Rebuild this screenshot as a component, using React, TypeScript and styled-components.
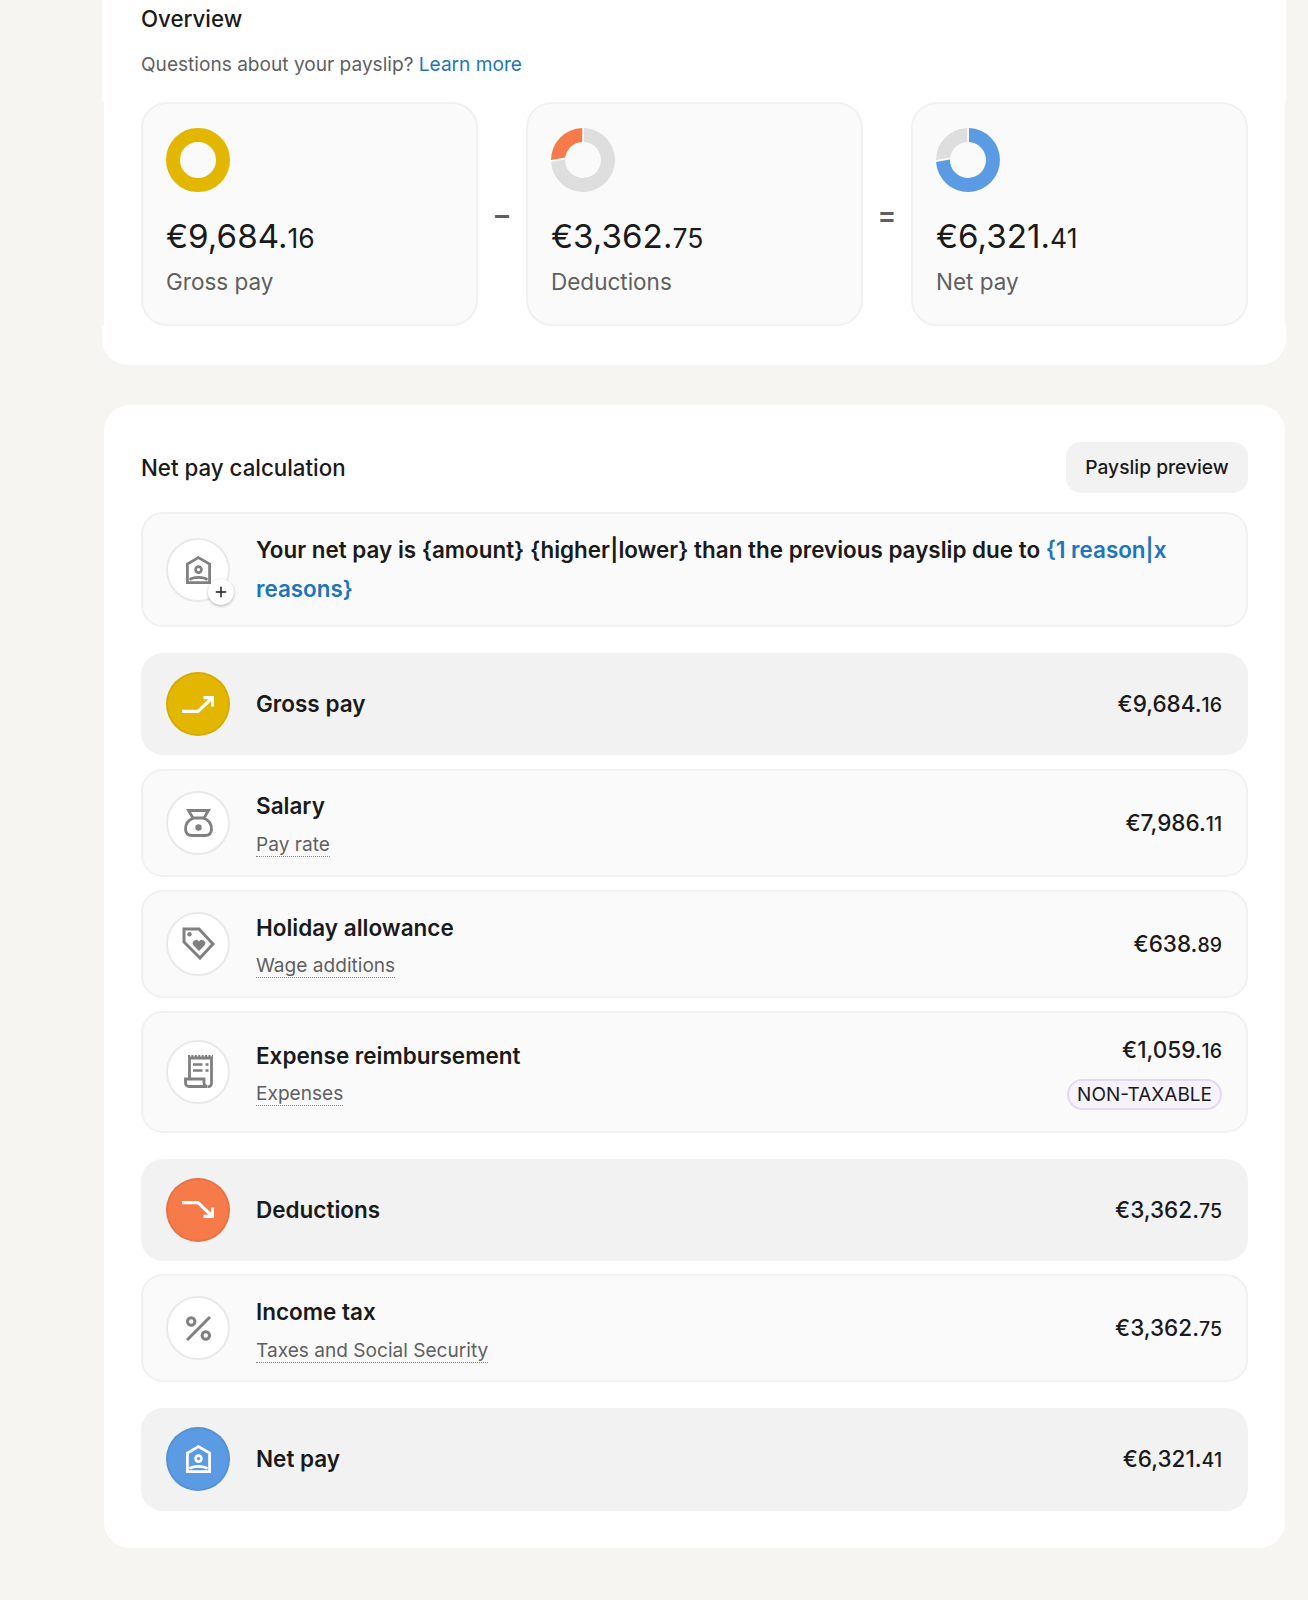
import React from "react";
import styled, { createGlobalStyle } from "styled-components";
import { Plus } from "lucide-react";

const colors = {
  page: "#F6F5F1",
  white: "#FFFFFF",
  card: "#FAFAFA",
  cardLine: "#F1F1F1",
  summary: "#F2F2F2",
  ink: "#1A1A1A",
  muted: "#5F5F5F",
  icon: "#808080",
  link: "#1F75B9",
  gold: "#E3B700",
  orange: "#F77A4A",
  blue: "#5A9BE3",
  ring: "#DEDEDE",
};

const GlobalStyle = createGlobalStyle`
  body {
    margin: 0;
    background: ${colors.page};
    font-family: Inter, "Liberation Sans", sans-serif;
    color: ${colors.ink};
  }
`;

const Page = styled.div`
  min-height: 1600px;
  box-sizing: border-box;
  padding: 0 22px 53px 102px;
  display: flex;
  flex-direction: column;
`;

const OverviewHead = styled.div`
  height: 102px;
  box-sizing: border-box;
  padding: 5px 38px 0 39px;
  background: ${colors.white};
`;

const OverviewTitle = styled.h2`
  margin: 0;
  font-size: 22.3px;
  line-height: 28px;
  font-weight: 500;
`;

const OverviewNote = styled.p`
  margin: 17px 0 0;
  font-size: 19.1px;
  line-height: 28px;
  color: ${colors.muted};
`;

const Link = styled.span`
  color: ${colors.link};
`;

const OverviewBody = styled.div`
  margin: 0 1.5px 0 2px;
  padding: 0 36.5px 0 37px;
  background: ${colors.white};
  display: flex;
`;

const OverviewFoot = styled.div`
  height: 39px;
  background: ${colors.white};
  border-radius: 0 0 26px 26px;
`;

const SumCard = styled.div`
  flex: 1;
  height: 224px;
  box-sizing: border-box;
  padding: 24px 23px 0;
  background: ${colors.card};
  border: 2px solid ${colors.cardLine};
  border-radius: 26px;
`;

const Donut = styled.svg`
  display: block;
  width: 64px;
  height: 64px;
`;

const SumAmount = styled.div`
  margin-top: 22px;
  font-size: 33.2px;
  line-height: 44px;
  white-space: nowrap;
`;

const SumCents = styled.span`
  font-size: 26.5px;
`;

const SumLabel = styled.div`
  margin-top: 6px;
  font-size: 22.5px;
  line-height: 32px;
  color: ${colors.muted};
`;

const Operator = styled.div`
  width: 48px;
  flex: none;
  display: flex;
  align-items: center;
  justify-content: center;
  padding-top: 1px;
  font-size: 28px;
  font-weight: 600;
  color: ${colors.muted};
`;

const CalcPanel = styled.section`
  margin: 40px 1px 0 2px;
  padding: 37px;
  background: ${colors.white};
  border-radius: 26px;
`;

const CalcHeader = styled.header`
  display: flex;
  align-items: center;
  justify-content: space-between;
  margin-bottom: 19px;
`;

const CalcTitle = styled.h2`
  margin: 0;
  font-size: 22.3px;
  font-weight: 500;
`;

const PreviewButton = styled.button`
  height: 51px;
  width: 182px;
  padding: 0 0 2px;
  border: 0;
  border-radius: 15px;
  background: ${colors.summary};
  color: ${colors.ink};
  font-family: inherit;
  font-size: 19.2px;
  font-weight: 500;
`;

const InfoCard = styled.div`
  display: flex;
  align-items: center;
  gap: 26px;
  height: 115px;
  box-sizing: border-box;
  padding: 0 25px 0 23px;
  background: ${colors.card};
  border: 2px solid ${colors.cardLine};
  border-radius: 22px;
`;

const InfoText = styled.p`
  margin: 0;
  font-size: 22.45px;
  line-height: 38.6px;
  font-weight: 600;
`;

const Groups = styled.div`
  display: flex;
  flex-direction: column;
  gap: 26px;
`;

const Group = styled.div`
  display: flex;
  flex-direction: column;
  gap: 13.3px;
`;

const Row = styled.div<{ $tall?: boolean }>`
  display: flex;
  align-items: center;
  gap: 26px;
  height: ${(p) => (p.$tall ? "121.5px" : "108px")};
  box-sizing: border-box;
  padding: 0 24px 0 23px;
  background: ${colors.card};
  border: 2px solid ${colors.cardLine};
  border-radius: 22px;
`;

const SummaryRow = styled.div`
  display: flex;
  align-items: center;
  gap: 26px;
  height: 102.3px;
  box-sizing: border-box;
  padding: 0 26px 0 25px;
  background: ${colors.summary};
  border-radius: 22px;
`;

const IconCircle = styled.div<{ $bg?: string }>`
  position: relative;
  flex: none;
  width: 64px;
  height: 64px;
  box-sizing: border-box;
  border-radius: 50%;
  display: flex;
  align-items: center;
  justify-content: center;
  background: ${(p) => p.$bg ?? colors.white};
  border: 2px solid ${(p) => (p.$bg ? "rgba(0,0,0,0.06)" : "#E9E9E9")};
`;

const PlusBadge = styled.span`
  position: absolute;
  right: -6px;
  bottom: -5px;
  width: 26px;
  height: 26px;
  border-radius: 50%;
  background: ${colors.white};
  box-shadow: 0 1px 3px rgba(0, 0, 0, 0.3);
  display: flex;
  align-items: center;
  justify-content: center;
  color: ${colors.ink};
`;

const RowText = styled.div`
  flex: 1;
  min-width: 0;
  padding-top: 3px;
`;

const SummaryTitle = styled.div`
  flex: 1;
  min-width: 0;
  font-size: 22.5px;
  line-height: 30px;
  font-weight: 600;
`;

const RowTitle = styled.div`
  font-size: 22.5px;
  line-height: 30px;
  font-weight: 600;
`;

const RowSub = styled.span`
  display: inline-block;
  margin-top: 10.5px;
  font-size: 19.1px;
  line-height: 24px;
  color: ${colors.muted};
  border-bottom: 1.5px dotted #8a8a8a;
`;

const RowEnd = styled.div`
  display: flex;
  flex-direction: column;
  align-items: flex-end;
  gap: 13px;
`;

const Amount = styled.div`
  padding-top: 1px;
  font-size: 22.5px;
  line-height: 30px;
  font-weight: 500;
  white-space: nowrap;
`;

const Cents = styled.span`
  font-size: 19.5px;
`;

const Tag = styled.span`
  height: 31px;
  box-sizing: border-box;
  padding: 0 8px;
  display: flex;
  align-items: center;
  border-radius: 16px;
  background: #f7f3fe;
  border: 2px solid #e2d9f8;
  font-size: 19px;
`;

const arcs = {
  quarter: "M31.2 0A32 32 0 0 0 0 32L14.2 29.5A18 18 0 0 1 31.2 14Z",
  rest: "M33 0A32 32 0 1 1 .05 34L14 31.5A18 18 0 1 0 33 14Z",
};

const money = (value: string) => value.split(".");

const HouseIcon = ({ color }: { color: string }) => (
  <svg width="25" height="28" viewBox="0 0 25 28" fill="none" stroke={color}>
    <path d="M12.5 1.6 23.6 8V26.6H1.4V8Z" strokeWidth="2.8" />
    <circle cx="12.5" cy="13.6" r="3" strokeWidth="2.6" />
    <path d="M3.5 23.8C7.5 20.6 17.5 20.6 21.5 23.8" strokeWidth="2.6" />
  </svg>
);

const TrendIcon = ({ down }: { down?: boolean }) => (
  <svg width="32" height="17" viewBox="0 0 32 17" fill="none" stroke="#fff" strokeWidth="3.2">
    {down ? (
      <path d="M0 1.6H16L30 15M21.5 15.4H30.6V6.5" />
    ) : (
      <path d="M0 15.4H16L30 2M21.5 1.6H30.6V10.5" />
    )}
  </svg>
);

const BagIcon = () => (
  <svg width="29" height="28" viewBox="0 0 29 28" fill="none" stroke={colors.icon} strokeWidth="2.8">
    <path d="M4.5 1.5H24.5L20 9H9Z" />
    <path d="M9.5 9C4.5 11 1.5 15 1.5 20 1.5 25 4 26.5 8 26.5H21C25 26.5 27.5 25 27.5 20 27.5 15 24.5 11 19.5 9" />
    <circle cx="14.5" cy="18.5" r="3.2" fill={colors.icon} stroke="none" />
  </svg>
);

const TagIcon = () => (
  <svg width="33" height="33" viewBox="0 0 33 33" fill="none" stroke={colors.icon} strokeWidth="3">
    <path d="M2 2H17L31 17 18 31 2 15Z" />
    <circle cx="7.5" cy="7.2" r="2.2" fill={colors.icon} stroke="none" />
    <path d="M17 24 11.3 18.2A3.2 3.2 0 0 1 17 14.6 3.2 3.2 0 0 1 22.7 18.2Z" fill={colors.icon} stroke="none" />
  </svg>
);

const ReceiptIcon = () => (
  <svg width="29" height="33" viewBox="0 0 29 33" fill="none" stroke={colors.icon} strokeWidth="2.8">
    <path d="M5.5 23V3H27.5V28.5A3 3 0 0 1 24 31.5" />
    <path d="M4 1.1H29" strokeWidth="2.2" strokeDasharray="2 1.4" />
    <path d="M1.5 24H20V28A3.5 3.5 0 0 0 23.5 31.5H5A3.5 3.5 0 0 1 1.5 28Z" />
    <path d="M9 9.5H18.5M9 15.5H18.5M21.5 9.5H24.5M21.5 15.5H24.5" strokeWidth="2.6" />
  </svg>
);

const PercentIcon = () => (
  <svg width="25" height="25" viewBox="0 0 25 25" fill="none" stroke={colors.icon} strokeWidth="3">
    <path d="M1 24 24 1" />
    <circle cx="5.2" cy="5.5" r="3.7" />
    <circle cx="19.8" cy="19.5" r="3.7" />
  </svg>
);

const overview = [
  { amount: "€9,684.16", label: "Gross pay", op: "–" },
  { amount: "€3,362.75", label: "Deductions", op: "=" },
  { amount: "€6,321.41", label: "Net pay", op: "" },
];

const renderDonut = (index: number) => {
  if (index === 0) {
    return (
      <Donut viewBox="0 0 64 64">
        <circle cx="32" cy="32" r="25" fill="none" stroke={colors.gold} strokeWidth="14" />
      </Donut>
    );
  }
  return (
    <Donut viewBox="0 0 64 64">
      <path d={arcs.quarter} fill={index === 1 ? colors.orange : colors.ring} />
      <path d={arcs.rest} fill={index === 1 ? colors.ring : colors.blue} />
    </Donut>
  );
};

const RowAmount = ({ value }: { value: string }) => {
  const [whole, cents] = money(value);
  return (
    <Amount>
      {whole}.<Cents>{cents}</Cents>
    </Amount>
  );
};

const App: React.FC = () => {
  return (
    <Page>
      <GlobalStyle />
      <OverviewHead>
        <OverviewTitle>Overview</OverviewTitle>
        <OverviewNote>
          Questions about your payslip? <Link>Learn more</Link>
        </OverviewNote>
      </OverviewHead>
      <OverviewBody>
        {overview.map((item, i) => {
          const [whole, cents] = money(item.amount);
          return (
            <React.Fragment key={item.label}>
              <SumCard>
                {renderDonut(i)}
                <SumAmount>
                  {whole}.<SumCents>{cents}</SumCents>
                </SumAmount>
                <SumLabel>{item.label}</SumLabel>
              </SumCard>
              {item.op && <Operator>{item.op}</Operator>}
            </React.Fragment>
          );
        })}
      </OverviewBody>
      <OverviewFoot />

      <CalcPanel>
        <CalcHeader>
          <CalcTitle>Net pay calculation</CalcTitle>
          <PreviewButton>Payslip preview</PreviewButton>
        </CalcHeader>
        <Groups>
          <InfoCard>
            <IconCircle>
              <HouseIcon color={colors.icon} />
              <PlusBadge>
                <Plus size={16} strokeWidth={2.2} />
              </PlusBadge>
            </IconCircle>
            <InfoText>
              Your net pay is {"{amount}"} {"{higher|lower}"} than the previous payslip due to{" "}
              <Link>{"{1 reason|x reasons}"}</Link>
            </InfoText>
          </InfoCard>

          <Group>
            <SummaryRow>
              <IconCircle $bg={colors.gold}>
                <TrendIcon />
              </IconCircle>
              <SummaryTitle>Gross pay</SummaryTitle>
              <RowAmount value="€9,684.16" />
            </SummaryRow>
            <Row>
              <IconCircle>
                <BagIcon />
              </IconCircle>
              <RowText>
                <RowTitle>Salary</RowTitle>
                <RowSub>Pay rate</RowSub>
              </RowText>
              <RowAmount value="€7,986.11" />
            </Row>
            <Row>
              <IconCircle>
                <TagIcon />
              </IconCircle>
              <RowText>
                <RowTitle>Holiday allowance</RowTitle>
                <RowSub>Wage additions</RowSub>
              </RowText>
              <RowAmount value="€638.89" />
            </Row>
            <Row $tall>
              <IconCircle>
                <ReceiptIcon />
              </IconCircle>
              <RowText>
                <RowTitle>Expense reimbursement</RowTitle>
                <RowSub>Expenses</RowSub>
              </RowText>
              <RowEnd>
                <RowAmount value="€1,059.16" />
                <Tag>NON-TAXABLE</Tag>
              </RowEnd>
            </Row>
          </Group>

          <Group>
            <SummaryRow>
              <IconCircle $bg={colors.orange}>
                <TrendIcon down />
              </IconCircle>
              <SummaryTitle>Deductions</SummaryTitle>
              <RowAmount value="€3,362.75" />
            </SummaryRow>
            <Row>
              <IconCircle>
                <PercentIcon />
              </IconCircle>
              <RowText>
                <RowTitle>Income tax</RowTitle>
                <RowSub>Taxes and Social Security</RowSub>
              </RowText>
              <RowAmount value="€3,362.75" />
            </Row>
          </Group>

          <SummaryRow>
            <IconCircle $bg={colors.blue}>
              <HouseIcon color="#fff" />
            </IconCircle>
            <SummaryTitle>Net pay</SummaryTitle>
            <RowAmount value="€6,321.41" />
          </SummaryRow>
        </Groups>
      </CalcPanel>
    </Page>
  );
};

export default App;
